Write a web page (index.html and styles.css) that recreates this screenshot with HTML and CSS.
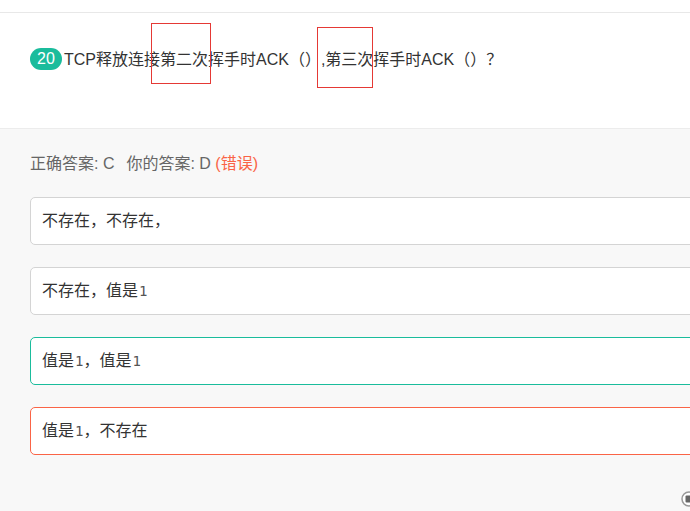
FILE: index.html
```html
<!DOCTYPE html>
<html lang="zh">
<head>
<meta charset="utf-8">
<title>TCP 题目</title>
<link rel="stylesheet" href="styles.css">
</head>
<body>
<div class="top">
  <div class="question">
    <p class="q-line"><span class="badge">20</span>TCP释放连接第二次挥手时ACK（）,第三次挥手时ACK（）？</p>
  </div>
  <span class="mark mark-a"></span>
  <span class="mark mark-b"></span>
</div>
<div class="answers">
  <p class="result">正确答案: C<span class="yours">你的答案: D</span> <span class="wrong">(错误)</span></p>
  <div class="option">不存在，不存在，</div>
  <div class="option">不存在，值是<span class="num">1</span></div>
  <div class="option correct">值是<span class="num">1</span>，值是<span class="num">1</span></div>
  <div class="option chosen">值是<span class="num">1</span>，不存在</div>
</div>
<div class="float-btn">
  <svg width="16" height="16" viewBox="0 0 16 16"><circle cx="8" cy="8" r="7" fill="#fff" stroke="#999" stroke-width="1.5"/><rect x="4.5" y="4.5" width="7" height="7" rx="1" fill="#666"/></svg>
</div>
</body>
</html>
```
FILE: styles.css
```css
html, body {
  margin: 0;
  padding: 0;
  overflow: hidden;
}
body {
  background: #f8f8f8;
  font-family: "Liberation Sans", "Noto Sans CJK SC", sans-serif;
  font-size: 16px;
  color: #333;
  height: 511px;
  position: relative;
}
.top {
  background: #fff;
  padding-top: 12px;
}
.question {
  border-top: 1px solid #e8e8e8;
  border-bottom: 1px solid #ececec;
  height: 115px;
  box-sizing: content-box;
}
.q-line {
  margin: 0;
  padding: 35px 0 0 30px;
  line-height: 24px;
  white-space: nowrap;
}
.badge {
  display: inline-block;
  width: 32px;
  height: 22px;
  line-height: 22px;
  border-radius: 11px;
  background: #1abc9c;
  color: #fff;
  text-align: center;
  margin-right: 2px;
  vertical-align: top;
}
.mark {
  position: absolute;
  border: 1px solid #e53935;
  box-sizing: border-box;
}
.mark-a {
  left: 151px;
  top: 23px;
  width: 60px;
  height: 61px;
}
.mark-b {
  left: 317px;
  top: 27px;
  width: 56px;
  height: 61px;
}
.answers {
  padding: 24px 0 0 30px;
}
.result {
  margin: 0 0 22px;
  line-height: 22px;
  color: #666;
  white-space: nowrap;
}
.yours {
  margin-left: 12px;
}
.wrong {
  color: #fa6446;
}
.option {
  width: 700px;
  height: 48px;
  box-sizing: border-box;
  border: 1px solid #d4d4d4;
  border-radius: 5px;
  background: #fff;
  padding: 0 11px;
  line-height: 46px;
  margin-bottom: 22px;
  color: #333;
}
.option.correct {
  border-color: #1abc9c;
}
.option.chosen {
  border-color: #fa6446;
  margin-top: 1px;
}
.num {
  font-family: "DejaVu Sans Mono", "Liberation Mono", monospace;
  font-size: 14px;
  color: #555;
  margin-left: 1px;
}
.float-btn {
  position: fixed;
  left: 681px;
  top: 491px;
  width: 16px;
  height: 16px;
}
.float-btn svg {
  display: block;
}
```
